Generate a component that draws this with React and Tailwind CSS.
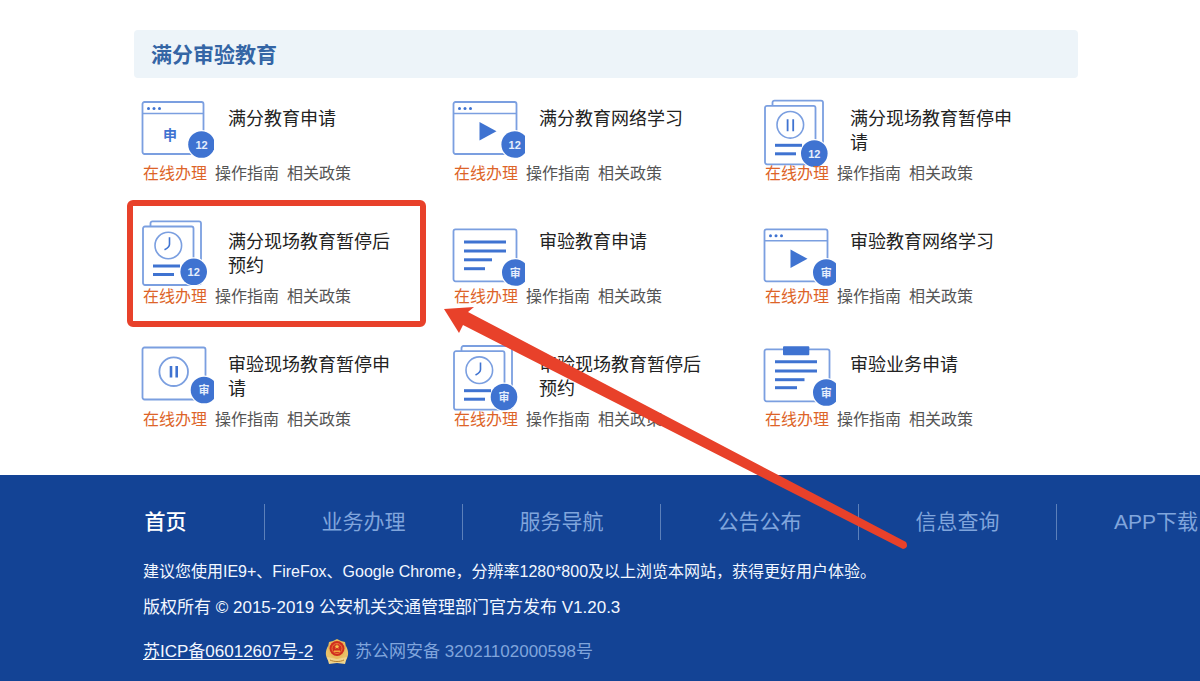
import React from "react";

const BLUE = "#3f73d1";
const LINE = "#7b9fe0";

const Badge = ({ x, y, text }) => (
  <g>
    <circle cx={x} cy={y} r="14.5" fill="#fff" />
    <circle cx={x} cy={y} r="13.3" fill={BLUE} />
    <text x={x} y={y + 4} textAnchor="middle" fontSize="11" fontWeight="700" fill="#e6eefc">
      {text}
    </text>
  </g>
);

const Frame = ({ x = 4.5, y, w = 63, h = 52 }) => (
  <rect x={x} y={y} width={w} height={h} rx="2" fill="#fff" stroke={LINE} strokeWidth="1.8" />
);

const Browser = ({ y, w = 63, children }) => (
  <g>
    <Frame y={y} w={w} />
    <path d={`M4.5 ${y + 11.5}h${w}`} stroke={LINE} strokeWidth="1.5" />
    {[10.5, 16, 21.5].map((cx) => (
      <circle key={cx} cx={cx} cy={y + 6.5} r="1.5" fill={BLUE} />
    ))}
    {children}
  </g>
);

const Lines = ({ ys, ends, x = 15 }) => (
  <g stroke={BLUE} strokeWidth="3">
    {ys.map((y, i) => (
      <path key={y} d={`M${x} ${y}H${ends[i]}`} />
    ))}
  </g>
);

const Pages = ({ y, children }) => (
  <g>
    <Frame x={12.5} y={y - 5.2} w={50.5} h={63} />
    <Frame x={5} y={y} w={50.5} h={58.5} />
    <circle cx="30.3" cy={y + 19} r="13.3" fill="none" stroke={LINE} strokeWidth="1.6" />
    {children}
    <Lines ys={[y + 39.5, y + 48]} ends={[42, 36]} />
  </g>
);

const Play = ({ y }) => <path d={`M30.5 ${y}v18.6l17 -9.3z`} fill={BLUE} />;

const Clock = ({ y }) => (
  <path d={`M31.5 ${y}v7q0 3-5 5.5`} fill="none" stroke={BLUE} strokeWidth="1.6" />
);

const icons = {
  apply: (
    <Browser y={5} w={61}>
      <text x="32" y="43" textAnchor="middle" fontSize="14" fontWeight="700" fill={BLUE}>
        申
      </text>
      <Badge x={63.5} y={47.5} text="12" />
    </Browser>
  ),
  study: (
    <Browser y={5}>
      <Play y={25} />
      <Badge x={65.7} y={47.5} text="12" />
    </Browser>
  ),
  pause: (
    <Pages y={8.8}>
      <path d="M27.6 22.3v12M33.2 22.3v12" stroke={BLUE} strokeWidth="1.8" />
      <Badge x={54.3} y={56.5} text="12" />
    </Pages>
  ),
  book: (
    <Pages y={6.5}>
      <Clock y={17.3} />
      <Badge x={55.7} y={51.8} text="12" />
    </Pages>
  ),
  checkApply: (
    <g>
      <Frame y={9.3} />
      <Lines ys={[22, 31, 39.8, 48.7]} ends={[57, 57, 43, 36]} />
      <Badge x={66.3} y={52.5} text="审" />
    </g>
  ),
  checkStudy: (
    <Browser y={9.3}>
      <Play y={29.5} />
      <Badge x={66.3} y={52.5} text="审" />
    </Browser>
  ),
  checkPause: (
    <g>
      <Frame y={4.5} />
      <circle cx="35.7" cy="28.7" r="14.3" fill="none" stroke={LINE} strokeWidth="1.8" />
      <path d="M33 23v11.5M38.7 23v11.5" stroke={BLUE} strokeWidth="2.6" />
      <Badge x={66} y={47} text="审" />
    </g>
  ),
  checkBook: (
    <Pages y={8.2}>
      <Clock y={19.5} />
      <Badge x={55} y={54} text="审" />
    </Pages>
  ),
  business: (
    <g>
      <Frame y={6.3} w={65} />
      <rect x="23" y="3.3" width="26.3" height="9" rx="1" fill={BLUE} />
      <Lines ys={[18.7, 28, 36.7, 44.7]} ends={[57, 57, 44.5, 37]} />
      <Badge x={66.3} y={49.5} text="审" />
    </g>
  ),
};

const services = [
  { icon: "apply", title: "满分教育申请" },
  { icon: "study", title: "满分教育网络学习" },
  { icon: "pause", title: "满分现场教育暂停申请" },
  { icon: "book", title: "满分现场教育暂停后预约", marked: true },
  { icon: "checkApply", title: "审验教育申请" },
  { icon: "checkStudy", title: "审验教育网络学习" },
  { icon: "checkPause", title: "审验现场教育暂停申请" },
  { icon: "checkBook", title: "审验现场教育暂停后预约" },
  { icon: "business", title: "审验业务申请" },
];

const navItems = ["首页", "业务办理", "服务导航", "公告公布", "信息查询", "APP下载"];

const ServiceCard = ({ icon, title, marked }) => (
  <article className="relative h-[123px]">
    <div className="flex h-[65px]">
      {/* the icon may hang down into the link row, the right side is cut */}
      <svg width="76" height="72" viewBox="0 0 76 72" className="shrink-0" aria-hidden="true">
        {icons[icon]}
      </svg>
      <h3 className="ml-[14px] w-[166px] pt-[10px] text-[18px] leading-6 text-[#222]">{title}</h3>
    </div>
    <div className="relative flex gap-2 pl-[5px] text-[16px] leading-6 text-[#555]">
      <a href="#" className="text-[#dd6428]">在线办理</a>
      <a href="#">操作指南</a>
      <a href="#">相关政策</a>
    </div>
    {marked && (
      <div className="pointer-events-none absolute -left-[11px] -top-5 h-[127px] w-[299px] rounded-md border-[6px] border-[#e8412a]" />
    )}
  </article>
);

const PoliceEmblem = () => (
  <svg width="24" height="26" viewBox="0 0 24 26" aria-hidden="true">
    <path d="M3 7C0 12 0 18 4 22h16c4-4 4-10 1-15l-3 9H6z" fill="#e9c168" />
    <path d="M2 18l10 2 10-2-2 7-8-1-8 1z" fill="#f0d48c" />
    <path d="M12 0l4 2 4 1 1 5-1 6c-1 3-5 5-8 6-3-1-7-3-8-6L3 8l1-5 4-1z" fill="#e8b95c" />
    <circle cx="12" cy="9.5" r="7.5" fill="#cf2d1e" />
    <circle cx="12" cy="9.5" r="5" fill="none" stroke="#f08a3c" strokeWidth="0.8" />
    <path d="M12 5l.8 1.8h1.9l-1.5 1.2.6 1.8-1.8-1.1-1.8 1.1.6-1.8-1.5-1.2h1.9z" fill="#f6c04d" />
    <path d="M9 11.5h6v1.5H9z" fill="#f2a43f" />
    <path d="M5 21c4 2 10 2 14 0" fill="none" stroke="#b5802f" />
  </svg>
);

export default function App() {
  return (
    <div className="relative flex min-h-screen flex-col overflow-hidden bg-white font-['Liberation_Sans','Noto_Sans_CJK_SC',sans-serif]">
      <main className="mr-[122px] ml-[134px] pt-[30px] pb-[9px]">
        <h2 className="rounded bg-[#edf4f9] pt-0.5 pl-[17px] text-[21px] leading-[46px] font-bold text-[#3465a5]">
          满分审验教育
        </h2>
        <section className="mt-[19px] grid grid-cols-3 pr-[7px] pl-1">
          {services.map((s) => (
            <ServiceCard key={s.title} {...s} />
          ))}
        </section>
      </main>

      <footer className="flex-1 bg-[#134395] pt-[29px] text-[#f2f7ff]">
        <nav className="ml-[67px] flex">
          {navItems.map((item, i) => (
            <a
              key={item}
              href="#"
              className={`w-[198px] shrink-0 border-r text-center text-[21px] leading-9 last:border-r-0 border-[#5c80ba] ${
                i === 0 ? "font-medium text-white" : "text-[#80a5dc]"
              }`}
            >
              {item}
            </a>
          ))}
        </nav>
        <div className="mt-[14px] ml-[143px] text-[17px] leading-9">
          <p className="text-[16px] leading-9">建议您使用IE9+、FireFox、Google Chrome，分辨率1280*800及以上浏览本网站，获得更好用户体验。</p>
          <p>版权所有 © 2015-2019 公安机关交通管理部门官方发布 V1.20.3</p>
          <div className="mt-2 flex items-center">
            <a href="#" className="underline underline-offset-2">苏ICP备06012607号-2</a>
            <a href="#" className="ml-3 flex items-center gap-[6px] text-[#80a5dc]">
              <PoliceEmblem />
              苏公网安备 32021102000598号
            </a>
          </div>
        </div>
      </footer>

      {/* arrow that points at the marked card */}
      <svg
        className="pointer-events-none absolute top-[300px] left-[440px]"
        width="475"
        height="256"
        viewBox="440 300 475 256"
        aria-hidden="true"
      >
        <path
          d="M444 309L474 307L468 312L906 542Q909 548 903 549L463 325L459 333Z"
          fill="#e8412a"
        />
      </svg>
    </div>
  );
}
